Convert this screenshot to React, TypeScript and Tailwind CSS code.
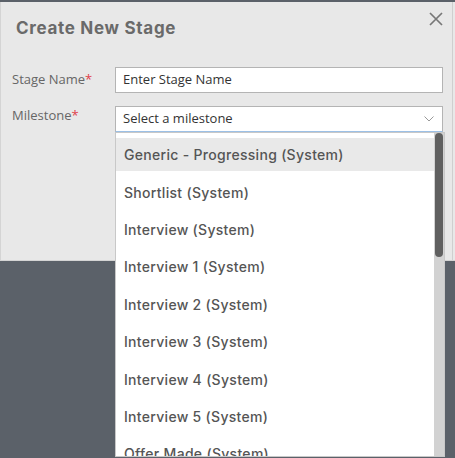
import React from "react";

const items = [
  "Generic - Progressing (System)",
  "Shortlist (System)",
  "Interview (System)",
  "Interview 1 (System)",
  "Interview 2 (System)",
  "Interview 3 (System)",
  "Interview 4 (System)",
  "Interview 5 (System)",
  "Offer Made (System)",
];

export default function App() {
  return (
    <div className="relative w-[455px] h-[458px] overflow-hidden bg-[#5b6169] pt-[2px]">
      <div className="h-[259px] bg-[#e8e8e8] pr-[2px] border-l border-b border-[#d4d4d4]">
        <div className="h-full border-r border-[#cfcfcf]">
          <div className="flex items-start justify-between pl-[15px] pr-[8px] pt-[14px] h-[65px]">
            <div
              className="text-[17px] font-bold text-[#6a6a6a] tracking-[0.7px]"
              style={{ fontFamily: "Inter, 'Noto Sans', sans-serif" }}
            >
              Create New Stage
            </div>
            <svg width="14" height="14" viewBox="0 0 14 14" className="mt-[-4px] mr-[1px]">
              <path d="M1 1 L13 13 M13 1 L1 13" stroke="#777" strokeWidth="1.7" />
            </svg>
          </div>
          <div
            className="flex flex-col gap-[13px] pl-[11px] pr-[9px]"
            style={{ fontFamily: "'Open Sans', sans-serif" }}
          >
            <div className="flex items-center">
              <div className="w-[103px] text-[13px] text-[#666]">
                Stage Name<span className="text-[#e0404a]">*</span>
              </div>
              <div className="flex-1 h-[26px] bg-white border border-[#b4b4b4] flex items-center pl-[7px] text-[13px] text-[#333]">
                Enter Stage Name
              </div>
            </div>
            <div className="flex items-start">
              <div className="w-[103px] text-[13px] text-[#666]">
                Milestone<span className="text-[#e0404a]">*</span>
              </div>
              <div className="flex-1 h-[26px] bg-white border border-[#b4b4b4] border-b-[#9cc0e6] flex items-center justify-between pl-[7px] pr-[8px] text-[13px] text-[#333]">
                <span>Select a milestone</span>
                <svg width="10" height="6" viewBox="0 0 10 6">
                  <path d="M0.5 0.5 L5 5 L9.5 0.5" fill="none" stroke="#999" strokeWidth="1" />
                </svg>
              </div>
            </div>
          </div>
        </div>
      </div>

      <div className="absolute left-[115px] top-[132px] w-[330px] h-[325px] bg-white border border-[#c8c8c8] flex">
        <div
          className="flex-1 pt-[3px] overflow-hidden"
          style={{ fontFamily: "Inter, 'Noto Sans', sans-serif" }}
        >
          {items.map((it, i) => (
            <div key={it} className="h-[37.4px] py-[2.2px]">
              <div
                className={
                  "h-full flex items-center pl-[8px] text-[14px] font-medium tracking-[0.3px] text-[#555] " +
                  (i === 0 ? "bg-[#e9e9e9]" : "")
                }
              >
                {it}
              </div>
            </div>
          ))}
        </div>
        <div className="w-[10px] bg-[#d2d2d2] flex justify-center">
          <div className="w-[8px] h-[124px] rounded-full bg-[#606060]" />
        </div>
      </div>
    </div>
  );
}
